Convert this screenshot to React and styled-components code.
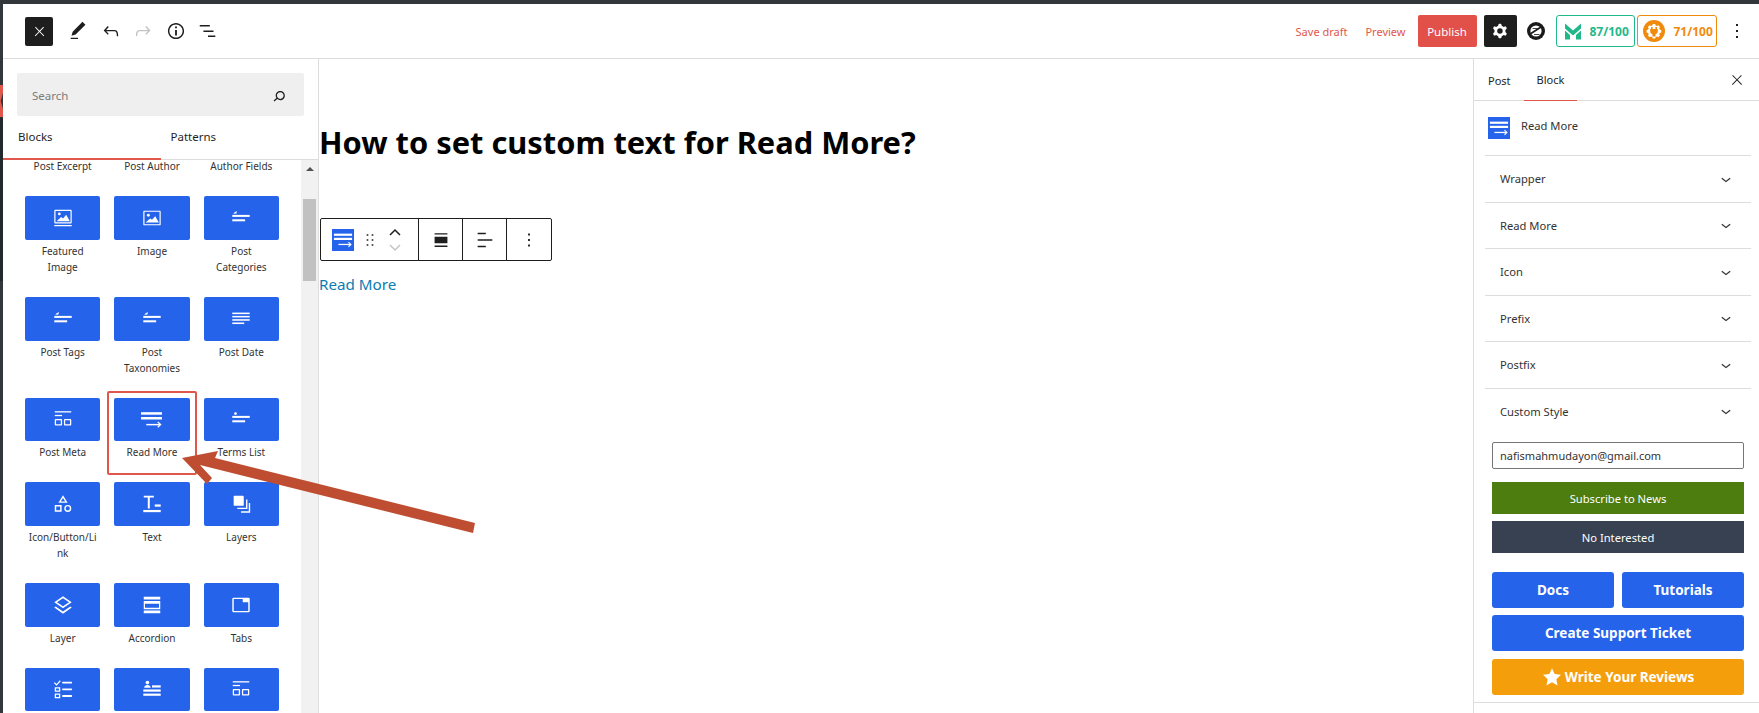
import React from "react";
import styled, { createGlobalStyle } from "styled-components";

const font = `"Noto Sans", "Open Sans", "Liberation Sans", sans-serif`;

const GlobalStyle = createGlobalStyle`
  html, body { margin: 0; padding: 0; height: 100%; background: #fff; overflow: hidden; }
  * { box-sizing: border-box; }
  #root { height: 100%; }
`;

const Page = styled.div`
  position: relative;
  width: 1759px;
  height: 713px;
  overflow: hidden;
  display: flex;
  flex-direction: column;
  background: #fff;
  font-family: ${font};
  color: #1e1e1e;
`;

const TopStripe = styled.div`
  height: 4px;
  flex: none;
  background: #32373c;
`;

const Workspace = styled.div`
  flex: 1;
  min-height: 0;
  display: flex;
`;

const LeftStrip = styled.div`
  width: 3px;
  flex: none;
  padding-top: 81px;
  background: linear-gradient(
    to bottom,
    #32373c 0,
    #32373c 114px,
    #23282d 114px,
    #23282d 277px,
    #32373c 277px
  );
`;

const RedMark = styled.div`
  height: 32px;
  background: #e2574c;
  clip-path: polygon(0 0, 100% 0, 100% 25%, 20% 50%, 100% 75%, 100% 100%, 0 100%);
`;

const Content = styled.div`
  flex: 1;
  min-width: 0;
  display: flex;
  flex-direction: column;
`;

const TopBar = styled.header`
  height: 55px;
  flex: none;
  display: flex;
  align-items: center;
  padding-left: 22px;
  padding-right: 6px;
  border-bottom: 1px solid #ddd;
`;

const CloseButton = styled.div`
  width: 28px;
  height: 29px;
  background: #1e1e1e;
  color: #fff;
  border-radius: 2px;
  display: flex;
  align-items: center;
  justify-content: center;
  margin-right: 9px;
`;

const ToolIcon = styled.div`
  width: 32.5px;
  height: 32px;
  display: flex;
  align-items: center;
  justify-content: center;
  color: ${(p) => (p.$muted ? "#c4c4c4" : "#1e1e1e")};
  margin-left: ${(p) => p.$left || 0}px;
`;

const Spacer = styled.div`
  flex: 1;
`;

const DraftLink = styled.span`
  font-size: 11px;
  color: #e2574c;
  margin-right: ${(p) => p.$gap}px;
`;

const PublishButton = styled.div`
  width: 59px;
  height: 32px;
  background: #e2504a;
  color: #fff;
  font-size: 11.5px;
  border-radius: 2px;
  display: flex;
  align-items: center;
  justify-content: center;
  margin-right: 7px;
`;

const GearButton = styled.div`
  width: 33px;
  height: 32px;
  background: #1e1e1e;
  color: #fff;
  border-radius: 2px;
  display: flex;
  align-items: center;
  justify-content: center;
  margin-right: 10px;
`;

const ScoreBadge = styled.div`
  height: 32px;
  width: ${(p) => p.$width}px;
  border: 1px solid ${(p) => p.$color};
  border-radius: 3px;
  color: ${(p) => p.$color};
  font-size: 12px;
  font-weight: 700;
  display: flex;
  align-items: center;
  gap: ${(p) => p.$gap}px;
  padding-left: ${(p) => p.$pad}px;
  margin-left: ${(p) => p.$left}px;
`;

const Body = styled.div`
  flex: 1;
  min-height: 0;
  display: flex;
`;

const LeftPanel = styled.aside`
  width: 316px;
  flex: none;
  display: flex;
  flex-direction: column;
  border-right: 1px solid #ddd;
`;

const SearchBox = styled.div`
  height: 43px;
  margin: 14px 14px 0;
  background: #efefef;
  border-radius: 2px;
  display: flex;
  align-items: center;
  justify-content: space-between;
  padding: 2px 15px 0;
  font-size: 11.5px;
  color: #7b7b7b;
`;

const PanelTabs = styled.div`
  height: 44px;
  flex: none;
  display: flex;
  border-bottom: 1px solid #ddd;
`;

const PanelTab = styled.div`
  width: 50%;
  padding-left: ${(p) => p.$pad}px;
  padding-top: 13px;
  font-size: 11.5px;
  color: #1e1e1e;
  border-bottom: ${(p) => (p.$active ? "2px solid #e2574c" : "none")};
  height: ${(p) => (p.$active ? "44px" : "auto")};
`;

const BlockArea = styled.div`
  flex: 1;
  min-height: 0;
  display: flex;
`;

const Scroller = styled.div`
  flex: 1;
  overflow: hidden;
`;

const BlockGrid = styled.div`
  margin-top: -48.5px;
  padding: 0 22px 0 22px;
  display: grid;
  grid-template-columns: repeat(3, 1fr);
  column-gap: 14px;
  row-gap: 22px;
`;

const BlockItem = styled.div`
  display: flex;
  flex-direction: column;
  min-width: 0;
`;

const BlockTile = styled.div`
  height: 43.7px;
  background: #2563eb;
  border-radius: 2px;
  color: #fff;
  display: flex;
  align-items: center;
  justify-content: center;
  margin-bottom: 3px;
`;

const BlockLabel = styled.div`
  font-size: 10px;
  line-height: 16px;
  padding: 0 3px;
  color: #333;
  text-align: center;
  overflow-wrap: anywhere;
`;

const ScrollTrack = styled.div`
  width: 17px;
  flex: none;
  background: #f1f1f1;
  display: flex;
  flex-direction: column;
  align-items: center;
`;

const ScrollArrow = styled.div`
  width: 0;
  height: 0;
  margin-top: 7px;
  border-left: 4px solid transparent;
  border-right: 4px solid transparent;
  border-bottom: 4px solid #505050;
`;

const ScrollThumb = styled.div`
  width: 13px;
  height: 82px;
  margin-top: 28px;
  background: #c1c1c1;
`;

const Editor = styled.main`
  flex: 1;
  min-width: 0;
  padding-left: 1px;
  display: flex;
  flex-direction: column;
  align-items: flex-start;
`;

const PostTitle = styled.h1`
  margin: 62px 0 0 -1px;
  font-size: 30.8px;
  line-height: 42px;
  font-weight: 700;
  color: #000;
`;

const BlockToolbar = styled.div`
  margin-top: 55px;
  height: 43px;
  display: flex;
  border: 1px solid #1e1e1e;
  border-radius: 2px;
`;

const ToolbarGroup = styled.div`
  width: ${(p) => p.$width}px;
  display: flex;
  align-items: center;
  justify-content: center;
  border-left: ${(p) => (p.$first ? "none" : "1px solid #1e1e1e")};
`;

const MoverGroup = styled(ToolbarGroup)`
  justify-content: flex-start;
  padding-left: 11px;
`;

const Mover = styled.div`
  margin-left: 8px;
  display: flex;
  flex-direction: column;
  align-items: center;
`;

const ReadMoreLink = styled.a`
  margin: 12px 0 0 -1px;
  font-size: 15.2px;
  line-height: 22px;
  color: #0b7cb4;
`;

const RightPanel = styled.aside`
  width: 286px;
  flex: none;
  margin-left: auto;
  display: flex;
  flex-direction: column;
  border-left: 1px solid #ddd;
`;

const SideTabs = styled.div`
  height: 42px;
  flex: none;
  display: flex;
  align-items: stretch;
  border-bottom: 1px solid #ddd;
  padding: 0 14px;
  font-size: 11px;
`;

const SideTab = styled.div`
  display: flex;
  align-items: center;
  margin-left: ${(p) => p.$left || 0}px;
  padding: 0 ${(p) => p.$pad || 0}px;
  height: 42px;
  color: #1e1e1e;
  border-bottom: ${(p) => (p.$active ? "1px solid #e2574c" : "none")};
`;

const SideClose = styled.div`
  margin-left: auto;
  display: flex;
  align-items: center;
  color: #1e1e1e;
`;

const BlockCard = styled.div`
  height: 54px;
  flex: none;
  display: flex;
  align-items: center;
  gap: 11px;
  padding-left: 14px;
`;

const CardTitle = styled.span`
  font-size: 11.2px;
  color: #333;
  margin-bottom: 6px;
`;

const Section = styled.div`
  height: 46.5px;
  flex: none;
  margin: 0 8px 0 11px;
  padding: 0 15px 0 15px;
  border-top: 1px solid #ddd;
  display: flex;
  align-items: center;
  justify-content: space-between;
  font-size: 11.2px;
  color: #333;
`;

const PromoBox = styled.div`
  padding: 8px 15px 0 18px;
  display: flex;
  flex-direction: column;
`;

const EmailInput = styled.div`
  height: 27px;
  border: 1px solid #767676;
  border-radius: 2px;
  display: flex;
  align-items: center;
  padding-left: 7px;
  font-size: 11px;
  color: #333;
`;

const NewsButton = styled.div`
  height: 32px;
  margin-top: ${(p) => p.$top}px;
  background: ${(p) => p.$bg};
  color: #fff;
  font-size: 11.2px;
  display: flex;
  align-items: center;
  justify-content: center;
`;

const LinkRow = styled.div`
  display: grid;
  grid-template-columns: 1fr 1fr;
  gap: 8px;
  margin-top: 19px;
`;

const LinkButton = styled.div`
  height: 36px;
  flex: none;
  margin-top: ${(p) => p.$top || 0}px;
  background: ${(p) => p.$bg || "#2563eb"};
  border-radius: 3px;
  color: #fff;
  font-size: 13.5px;
  font-weight: 700;
  display: flex;
  align-items: center;
  justify-content: center;
  gap: 3px;
`;

const SideFoot = styled.div`
  margin: 7px 0 0;
  border-top: 1px solid #ddd;
`;

const HighlightBox = styled.div`
  position: absolute;
  left: 107px;
  top: 391px;
  width: 90px;
  height: 84px;
  border: 2px solid #e2574c;
  border-radius: 2px;
`;

const ArrowOverlay = styled.svg`
  position: absolute;
  left: 0;
  top: 0;
  pointer-events: none;
`;

const BlockGlyph = styled.div`
  width: 22px;
  height: 22px;
  flex: none;
  background: #2563eb;
  display: flex;
  align-items: center;
  justify-content: center;
`;

const Ico = ({ size = 24, children, ...rest }) => (
  <svg width={size} height={size} viewBox="0 0 24 24" fill="currentColor" {...rest}>
    {children}
  </svg>
);

const CloseIcon = ({ size = 24 }) => (
  <Ico size={size}>
    <path d="M13 11.8l6.1-6.3-1-1-6.1 6.2-6.1-6.2-1 1 6.1 6.3-6.5 6.7 1 1 6.5-6.6 6.5 6.6 1-1z" />
  </Ico>
);
const ChevronDown = () => (
  <Ico size={20}>
    <path d="M17.5 11.6L12 16l-5.5-4.4.9-1.2L12 14l4.5-3.6 1 1.2z" />
  </Ico>
);
const MoreIcon = ({ size = 24 }) => (
  <Ico size={size}>
    <path d="M13 19h-2v-2h2v2zm0-6h-2v-2h2v2zm0-6h-2V5h2v2z" />
  </Ico>
);
const ReadMoreGlyph = ({ size = 24, color = "#fff" }) => (
  <svg width={size} height={size} viewBox="0 0 22 22" fill={color}>
    <rect x="1" y="4" width="20" height="2.4" />
    <rect x="1" y="8.6" width="20" height="2.4" />
    <rect x="6" y="15.2" width="13" height="1.4" />
    <path d="M17.4 12.9 L20.6 15.9 L17.4 18.9 L16.6 18 L18.8 15.9 L16.6 13.8 Z" />
  </svg>
);

const lines = (
  <>
    <path d="M4 6.5 L7.5 4.4 L7 7 L4 7.4 Z" />
    <rect x="2.5" y="8.6" width="19" height="2.2" />
    <rect x="2.5" y="13.4" width="14" height="2.2" />
  </>
);

const dotLines = (
  <>
    <circle cx="6" cy="6" r="1.5" />
    <rect x="2.5" y="8.6" width="19" height="2.2" />
    <rect x="2.5" y="13.4" width="14" height="2.2" />
  </>
);

const tileIcons = {
  lines,
  dotLines,
  featured: (
    <>
      <path fillRule="evenodd" d="M3.5 3h17a1 1 0 0 1 1 1v13a1 1 0 0 1-1 1h-17a1 1 0 0 1-1-1V4a1 1 0 0 1 1-1zm.3 1.3v12.4h16.4V4.3z" />
      <circle cx="8" cy="7.6" r="1.5" />
      <path d="M5 15.5 L10 11 L12 12.5 L15.5 8.5 L19.5 15.5 Z" />
      <rect x="2.5" y="19.6" width="19" height="1.4" />
    </>
  ),
  image: (
    <>
      <path fillRule="evenodd" d="M3.5 4h17a1 1 0 0 1 1 1v14a1 1 0 0 1-1 1h-17a1 1 0 0 1-1-1V5a1 1 0 0 1 1-1zm.3 1.3v13.4h16.4V5.3z" />
      <circle cx="8" cy="9" r="1.6" />
      <path d="M5 17 L10 12.5 L12 14 L15.5 10 L19.5 17 Z" />
    </>
  ),
  date: (
    <>
      <rect x="2.5" y="5" width="19" height="1.7" />
      <rect x="2.5" y="8.6" width="19" height="1.7" />
      <rect x="2.5" y="12.2" width="19" height="1.7" />
      <rect x="2.5" y="15.8" width="13" height="1.7" />
    </>
  ),
  meta: (
    <>
      <rect x="3" y="3.5" width="18" height="1.4" />
      <rect x="3" y="7.5" width="8" height="1.4" />
      <path fillRule="evenodd" d="M4 12h6a1 1 0 0 1 1 1v5a1 1 0 0 1-1 1H4a1 1 0 0 1-1-1v-5a1 1 0 0 1 1-1zm.4 1.4v4.2h5.2v-4.2z" />
      <path fillRule="evenodd" d="M14 12h6a1 1 0 0 1 1 1v5a1 1 0 0 1-1 1h-6a1 1 0 0 1-1-1v-5a1 1 0 0 1 1-1zm.4 1.4v4.2h5.2v-4.2z" />
    </>
  ),
  shapes: (
    <>
      <path fillRule="evenodd" d="M12 2.5 L17 10.5 H7 Z M12 5.4 L9.6 9.2 H14.4 Z" />
      <path fillRule="evenodd" d="M3 13h7.5v7.5H3zm1.6 1.6v4.3h4.3v-4.3z" />
      <path fillRule="evenodd" d="M17.2 13a3.8 3.8 0 1 1 0 7.6 3.8 3.8 0 0 1 0-7.6zm0 1.5a2.3 2.3 0 1 0 0 4.6 2.3 2.3 0 0 0 0-4.6z" />
    </>
  ),
  text: (
    <>
      <path d="M3 3h11v2H9.6v12H7.4V5H3z" />
      <rect x="15" y="12.5" width="6.5" height="2.4" />
      <rect x="2.5" y="18.5" width="19" height="2.4" />
    </>
  ),
  layers: (
    <>
      <rect x="4" y="3" width="11" height="11" rx="1" />
      <path d="M17.5 7 H19 V17.5 H8 V16 H17.5 Z" />
      <path d="M20.5 11 H22 V21.5 H12 V20 H20.5 Z" />
    </>
  ),
  layer: (
    <>
      <path fillRule="evenodd" d="M12 2.5 L21.5 9 L12 15.5 L2.5 9 Z M12 4.6 L5.4 9 L12 13.4 L18.6 9 Z" />
      <path d="M4 13.5 L12 19 L20 13.5 L21.5 14.8 L12 21.5 L2.5 14.8 Z" />
    </>
  ),
  accordion: (
    <>
      <rect x="3" y="3" width="18" height="3" />
      <path fillRule="evenodd" d="M3 7.5h18v9H3zm1.4 3v4.6h15.2v-4.6z" />
      <rect x="3" y="18" width="18" height="3" />
    </>
  ),
  tabs: (
    <path fillRule="evenodd" d="M4 4h16a1.5 1.5 0 0 1 1.5 1.5v13a1.5 1.5 0 0 1-1.5 1.5H4a1.5 1.5 0 0 1-1.5-1.5v-13A1.5 1.5 0 0 1 4 4zm.1 1.5v13h15.8V9h-6V5.5z" />
  ),
  checklist: (
    <>
      <path d="M3 4.5 L5 6.5 L8.5 2.5 L9.5 3.5 L5 8.5 L2 5.5 Z" />
      <rect x="11" y="4" width="11" height="2" rx="1" />
      <path fillRule="evenodd" d="M3 10h6v5H3zm1.4 1.4v2.2h3.2v-2.2z" />
      <rect x="11" y="11.4" width="11" height="2" rx="1" />
      <path fillRule="evenodd" d="M3 17h6v5H3zm1.4 1.4v2.2h3.2v-2.2z" />
      <rect x="11" y="18.6" width="11" height="2" rx="1" />
    </>
  ),
  author: (
    <>
      <circle cx="7" cy="5" r="2" />
      <path d="M3.5 10.5c0-2 1.5-3 3.5-3s3.5 1 3.5 3z" />
      <rect x="12" y="8" width="9.5" height="2.4" />
      <rect x="2.5" y="12.5" width="19" height="2.4" />
      <rect x="2.5" y="17" width="19" height="2.4" />
    </>
  ),
};

// the last row runs off the bottom of the panel, so its labels are not in view
const blocks = [
  ["Post Excerpt", "lines"],
  ["Post Author", "lines"],
  ["Author Fields", "lines"],
  ["Featured Image", "featured"],
  ["Image", "image"],
  ["Post Categories", "lines"],
  ["Post Tags", "lines"],
  ["Post Taxonomies", "lines"],
  ["Post Date", "date"],
  ["Post Meta", "meta"],
  ["Read More", "readmore"],
  ["Terms List", "dotLines"],
  ["Icon/Button/Link", "shapes"],
  ["Text", "text"],
  ["Layers", "layers"],
  ["Layer", "layer"],
  ["Accordion", "accordion"],
  ["Tabs", "tabs"],
  ["", "checklist"],
  ["", "author"],
  ["", "meta"],
];

const sections = ["Wrapper", "Read More", "Icon", "Prefix", "Postfix", "Custom Style"];

function ReadMoreBadge() {
  return (
    <BlockGlyph>
      <ReadMoreGlyph size={20} />
    </BlockGlyph>
  );
}

export default function App() {
  return (
    <Page>
      <GlobalStyle />
      <TopStripe />
      <Workspace>
        <LeftStrip>
          <RedMark />
        </LeftStrip>
        <Content>
          <TopBar>
            <CloseButton>
              <CloseIcon size={15} />
            </CloseButton>
            <ToolIcon>
              <Ico size={22}>
                <path d="M20.1 5.1L16.9 2 6.2 12.7l-1.3 4.4 4.5-1.3L20.1 5.1zM4 20.8h8v-1.5H4v1.5z" />
              </Ico>
            </ToolIcon>
            <ToolIcon>
              <Ico size={22}>
                <path d="M18.3 11.7c-.6-.6-1.4-.9-2.3-.9H6.7l2.9-3.3-1.1-1-4.5 5L8.5 16l1-1-2.7-2.7H16c.5 0 .9.2 1.3.5 1 1 1 3.4 1 4.5v.3h1.5v-.2c0-1.5 0-4.3-1.5-5.7z" />
              </Ico>
            </ToolIcon>
            <ToolIcon $muted>
              <Ico size={22}>
                <path d="M15.6 6.5l-1.1 1 2.9 3.3H8c-.9 0-1.7.3-2.3.9-1.4 1.5-1.4 4.2-1.4 5.6v.2h1.5v-.3c0-1.1 0-3.5 1-4.5.3-.3.7-.5 1.3-.5h9.2L14.5 15l1.1 1.1 4.6-4.6-4.6-5z" />
              </Ico>
            </ToolIcon>
            <ToolIcon>
              <Ico size={22}>
                <path d="M12 3.2c-4.8 0-8.8 3.9-8.8 8.8 0 4.8 3.9 8.8 8.8 8.8 4.8 0 8.8-3.9 8.8-8.8 0-4.8-4-8.8-8.8-8.8zm0 16c-4 0-7.2-3.3-7.2-7.2C4.8 8 8 4.8 12 4.8s7.2 3.3 7.2 7.2c0 4-3.2 7.2-7.2 7.2zM11 17h2v-6h-2v6zm0-8h2V7h-2v2z" />
              </Ico>
            </ToolIcon>
            <ToolIcon>
              <Ico size={22}>
                <path d="M3 5.5h11v1.5H3zM7 11.5h11v1.5H7zM12 17h8v1.5h-8z" />
              </Ico>
            </ToolIcon>
            <Spacer />
            <DraftLink $gap={18}>Save draft</DraftLink>
            <DraftLink $gap={12}>Preview</DraftLink>
            <PublishButton>Publish</PublishButton>
            <GearButton>
              <Ico size={22}>
                <path
                  fillRule="evenodd"
                  d="M10.289 4.836A1 1 0 0111.275 4h1.306a1 1 0 01.987.836l.244 1.466c.787.26 1.503.679 2.108 1.218l1.393-.522a1 1 0 011.216.437l.653 1.13a1 1 0 01-.23 1.273l-1.148.944a6.025 6.025 0 010 2.435l1.149.946a1 1 0 01.23 1.272l-.653 1.13a1 1 0 01-1.216.437l-1.394-.522c-.605.54-1.32.958-2.108 1.218l-.244 1.466a1 1 0 01-.987.836h-1.306a1 1 0 01-.986-.836l-.244-1.466a5.995 5.995 0 01-2.108-1.218l-1.394.522a1 1 0 01-1.217-.436l-.653-1.131a1 1 0 01.23-1.272l1.149-.946a6.026 6.026 0 010-2.435l-1.148-.944a1 1 0 01-.23-1.272l.653-1.131a1 1 0 011.217-.437l1.393.522a5.994 5.994 0 012.108-1.218l.244-1.466zM14.929 12a3 3 0 11-6 0 3 3 0 016 0z"
                />
              </Ico>
            </GearButton>
            <svg width="18" height="18" viewBox="0 0 18 18">
              <circle cx="9" cy="9" r="9" fill="#1a1a1a" />
              <circle cx="9" cy="9" r="5.6" fill="#fff" />
              <path d="M4 11.5 L14 5" stroke="#1a1a1a" strokeWidth="1.6" />
              <path d="M5.5 6.5 H11 M7 12.5 H12.5" stroke="#1a1a1a" strokeWidth="0.8" />
            </svg>
            <ScoreBadge $color="#1fb88a" $width={79} $pad={8} $gap={9} $left={11}>
              <svg width="16" height="17" viewBox="0 0 16 16" fill="#1fb88a">
                <path d="M0 0 L8 7 L16 0 L16 5 L8 12 L0 5 Z" />
                <path d="M0 7 L5 11.4 V16 H0 Z" />
                <path d="M16 7 V16 H11 V11.4 Z" />
              </svg>
              87/100
            </ScoreBadge>
            <ScoreBadge $color="#f08a0c" $width={80} $pad={5} $gap={9} $left={2}>
              <svg width="22" height="22" viewBox="0 0 22 22">
                <circle cx="11" cy="11" r="11" fill="#f08a0c" />
                <path
                  fill="#fff"
                  d="M9.5 4 h3 l.4 1.7 1.6.7 1.5-.9 2.1 2.1-.9 1.5.7 1.6 1.7.4 v3 l-1.7.4-.7 1.6.9 1.5-2.1 2.1-1.5-.9-1.6.7-.4 1.7 h-3 l-.4-1.7-1.6-.7-1.5.9-2.1-2.1.9-1.5-.7-1.6-1.7-.4 v-3 l1.7-.4.7-1.6-.9-1.5 2.1-2.1 1.5.9 1.6-.7 z"
                  transform="translate(1.6 .6) scale(.85)"
                />
                <path fill="#f08a0c" d="M8 7h1.6v2h2.8V7H14v2h.8v2.5c0 1.3-1 2.4-2.2 2.5v2.5h-3.2V14c-1.2-.1-2.2-1.2-2.2-2.5V9H8z" />
              </svg>
              71/100
            </ScoreBadge>
            <ToolIcon $left={4}>
              <MoreIcon />
            </ToolIcon>
          </TopBar>

          <Body>
            <LeftPanel>
              <SearchBox>
                Search
                <Ico size={20} style={{ color: "#1e1e1e" }}>
                  <path d="M13.5 6C10.5 6 8 8.5 8 11.5c0 1.1.3 2.1.9 3l-3.4 3 1 1.1 3.4-2.9c1 .9 2.2 1.4 3.6 1.4 3 0 5.5-2.5 5.5-5.5C19 8.5 16.5 6 13.5 6zm0 9.5c-2.2 0-4-1.8-4-4s1.8-4 4-4 4 1.8 4 4-1.8 4-4 4z" />
                </Ico>
              </SearchBox>
              <PanelTabs>
                <PanelTab $active $pad={15}>Blocks</PanelTab>
                <PanelTab $pad={10}>Patterns</PanelTab>
              </PanelTabs>
              <BlockArea>
                <Scroller>
                  <BlockGrid>
                    {blocks.map(([label, icon], i) => (
                      <BlockItem key={i}>
                        <BlockTile>
                          {icon === "readmore" ? <ReadMoreGlyph size={23} /> : <Ico size={22}>{tileIcons[icon]}</Ico>}
                        </BlockTile>
                        {label && <BlockLabel>{label}</BlockLabel>}
                      </BlockItem>
                    ))}
                  </BlockGrid>
                </Scroller>
                <ScrollTrack>
                  <ScrollArrow />
                  <ScrollThumb />
                </ScrollTrack>
              </BlockArea>
            </LeftPanel>

            <Editor>
              <PostTitle>How to set custom text for Read More?</PostTitle>
              <BlockToolbar>
                <MoverGroup $first $width={97}>
                  <ReadMoreBadge />
                  <Ico size={20} style={{ marginLeft: 6 }}>
                    <path d="M8 7h2V5H8v2zm0 6h2v-2H8v2zm0 6h2v-2H8v2zm6-14v2h2V5h-2zm0 8h2v-2h-2v2zm0 6h2v-2h-2v2z" />
                  </Ico>
                  <Mover>
                    <svg width="14" height="9" viewBox="0 0 14 9" fill="none" stroke="#1e1e1e" strokeWidth="1.5">
                      <path d="M2 7 L7 2 L12 7" />
                    </svg>
                    <svg width="14" height="9" viewBox="0 0 14 9" fill="none" stroke="#c4c4c4" strokeWidth="1.5" style={{ marginTop: 6 }}>
                      <path d="M2 2 L7 7 L12 2" />
                    </svg>
                  </Mover>
                </MoverGroup>
                <ToolbarGroup $width={44}>
                  <Ico size={22}>
                    <path d="M5 4.5h14V6H5zM5 18h14v1.5H5zM5 8.5h14v7H5z" />
                  </Ico>
                </ToolbarGroup>
                <ToolbarGroup $width={44}>
                  <Ico size={22}>
                    <path d="M4 19.8h8.9v-1.5H4v1.5zm8.9-15.6H4v1.5h8.9V4.2zm-8.9 7v1.5h16v-1.5H4z" />
                  </Ico>
                </ToolbarGroup>
                <ToolbarGroup $width={45}>
                  <MoreIcon size={22} />
                </ToolbarGroup>
              </BlockToolbar>
              <ReadMoreLink>Read More</ReadMoreLink>
            </Editor>

            <RightPanel>
              <SideTabs>
                <SideTab>Post</SideTab>
                <SideTab $active $left={13} $pad={13}>Block</SideTab>
                <SideClose>
                  <CloseIcon size={16} />
                </SideClose>
              </SideTabs>
              <BlockCard>
                <ReadMoreBadge />
                <CardTitle>Read More</CardTitle>
              </BlockCard>
              {sections.map((name) => (
                <Section key={name}>
                  {name}
                  <ChevronDown />
                </Section>
              ))}
              <PromoBox>
                <EmailInput>nafismahmudayon@gmail.com</EmailInput>
                <NewsButton $bg="#4d7c0f" $top={13}>Subscribe to News</NewsButton>
                <NewsButton $bg="#374151" $top={7}>No Interested</NewsButton>
                <LinkRow>
                  <LinkButton>Docs</LinkButton>
                  <LinkButton>Tutorials</LinkButton>
                </LinkRow>
                <LinkButton $top={7}>Create Support Ticket</LinkButton>
                <LinkButton $top={8} $bg="#f59e0b">
                  <svg width="20" height="20" viewBox="0 0 24 24" fill="#fff">
                    <path d="M12 1.5l3.2 7 7.6.9-5.6 5.2 1.5 7.5L12 18.3l-6.7 3.8 1.5-7.5L1.2 9.4l7.6-.9z" />
                  </svg>
                  Write Your Reviews
                </LinkButton>
              </PromoBox>
              <SideFoot />
            </RightPanel>
          </Body>
        </Content>
      </Workspace>

      <HighlightBox />
      <ArrowOverlay width="1759" height="713" viewBox="0 0 1759 713">
        <path
          fill="#bf4d31"
          d="M475 523 L215 458 L218 451 L182 458 L207 484 L212 478 L200 465 L473 533 Z"
        />
      </ArrowOverlay>
    </Page>
  );
}
